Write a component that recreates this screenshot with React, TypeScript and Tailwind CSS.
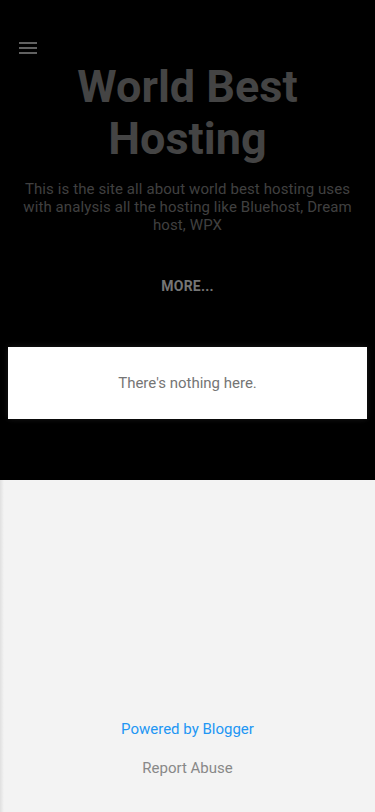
import React from "react";

export default function App() {
  return (
    <div className="min-h-[812px] flex flex-col bg-[#f3f3f3]" style={{ fontFamily: "Roboto, 'Liberation Sans', sans-serif" }}>
      <div className="bg-black h-[480px] flex flex-col">
        <div className="pt-[36px] pl-[16px] h-[60px]">
          <svg width="24" height="24" viewBox="0 0 24 24" fill="#616161">
            <path d="M3 6h18v2H3zM3 11h18v2H3zM3 16h18v2H3z" />
          </svg>
        </div>
        <h1 className="text-center font-bold text-[45px] leading-[52px] text-[#444444] px-4 mt-[1px]">
          World Best Hosting
        </h1>
        <p className="text-center text-[15px] leading-[18px] tracking-[0.1px] text-[#404040] px-[18px] mt-[15px]">
          This is the site all about world best hosting uses with analysis all the hosting like Bluehost, Dream host, WPX
        </p>
        <div className="text-center font-bold text-[14px] leading-[18px] text-[#757575] mt-[43px] tracking-[0.2px]">
          MORE...
        </div>
        <div className="mx-[8px] mt-[52px] h-[72px] bg-white flex items-center justify-center shadow-[0_2px_4px_rgba(0,0,0,0.3),0_0_6px_rgba(255,255,255,0.12)]">
          <span className="text-[15px] text-[#757575]">There's nothing here.</span>
        </div>
      </div>
      <div className="flex-1 flex flex-col items-center relative">
        <div className="absolute left-0 top-0 bottom-0 w-[4px] bg-gradient-to-r from-[#e0e0e0] to-[#f3f3f3]" />
        <a className="mt-[239px] text-[15px] leading-[20px] text-[#2196f3]">Powered by Blogger</a>
        <a className="mt-[19px] text-[15px] leading-[20px] text-[#888888]">Report Abuse</a>
      </div>
    </div>
  );
}
